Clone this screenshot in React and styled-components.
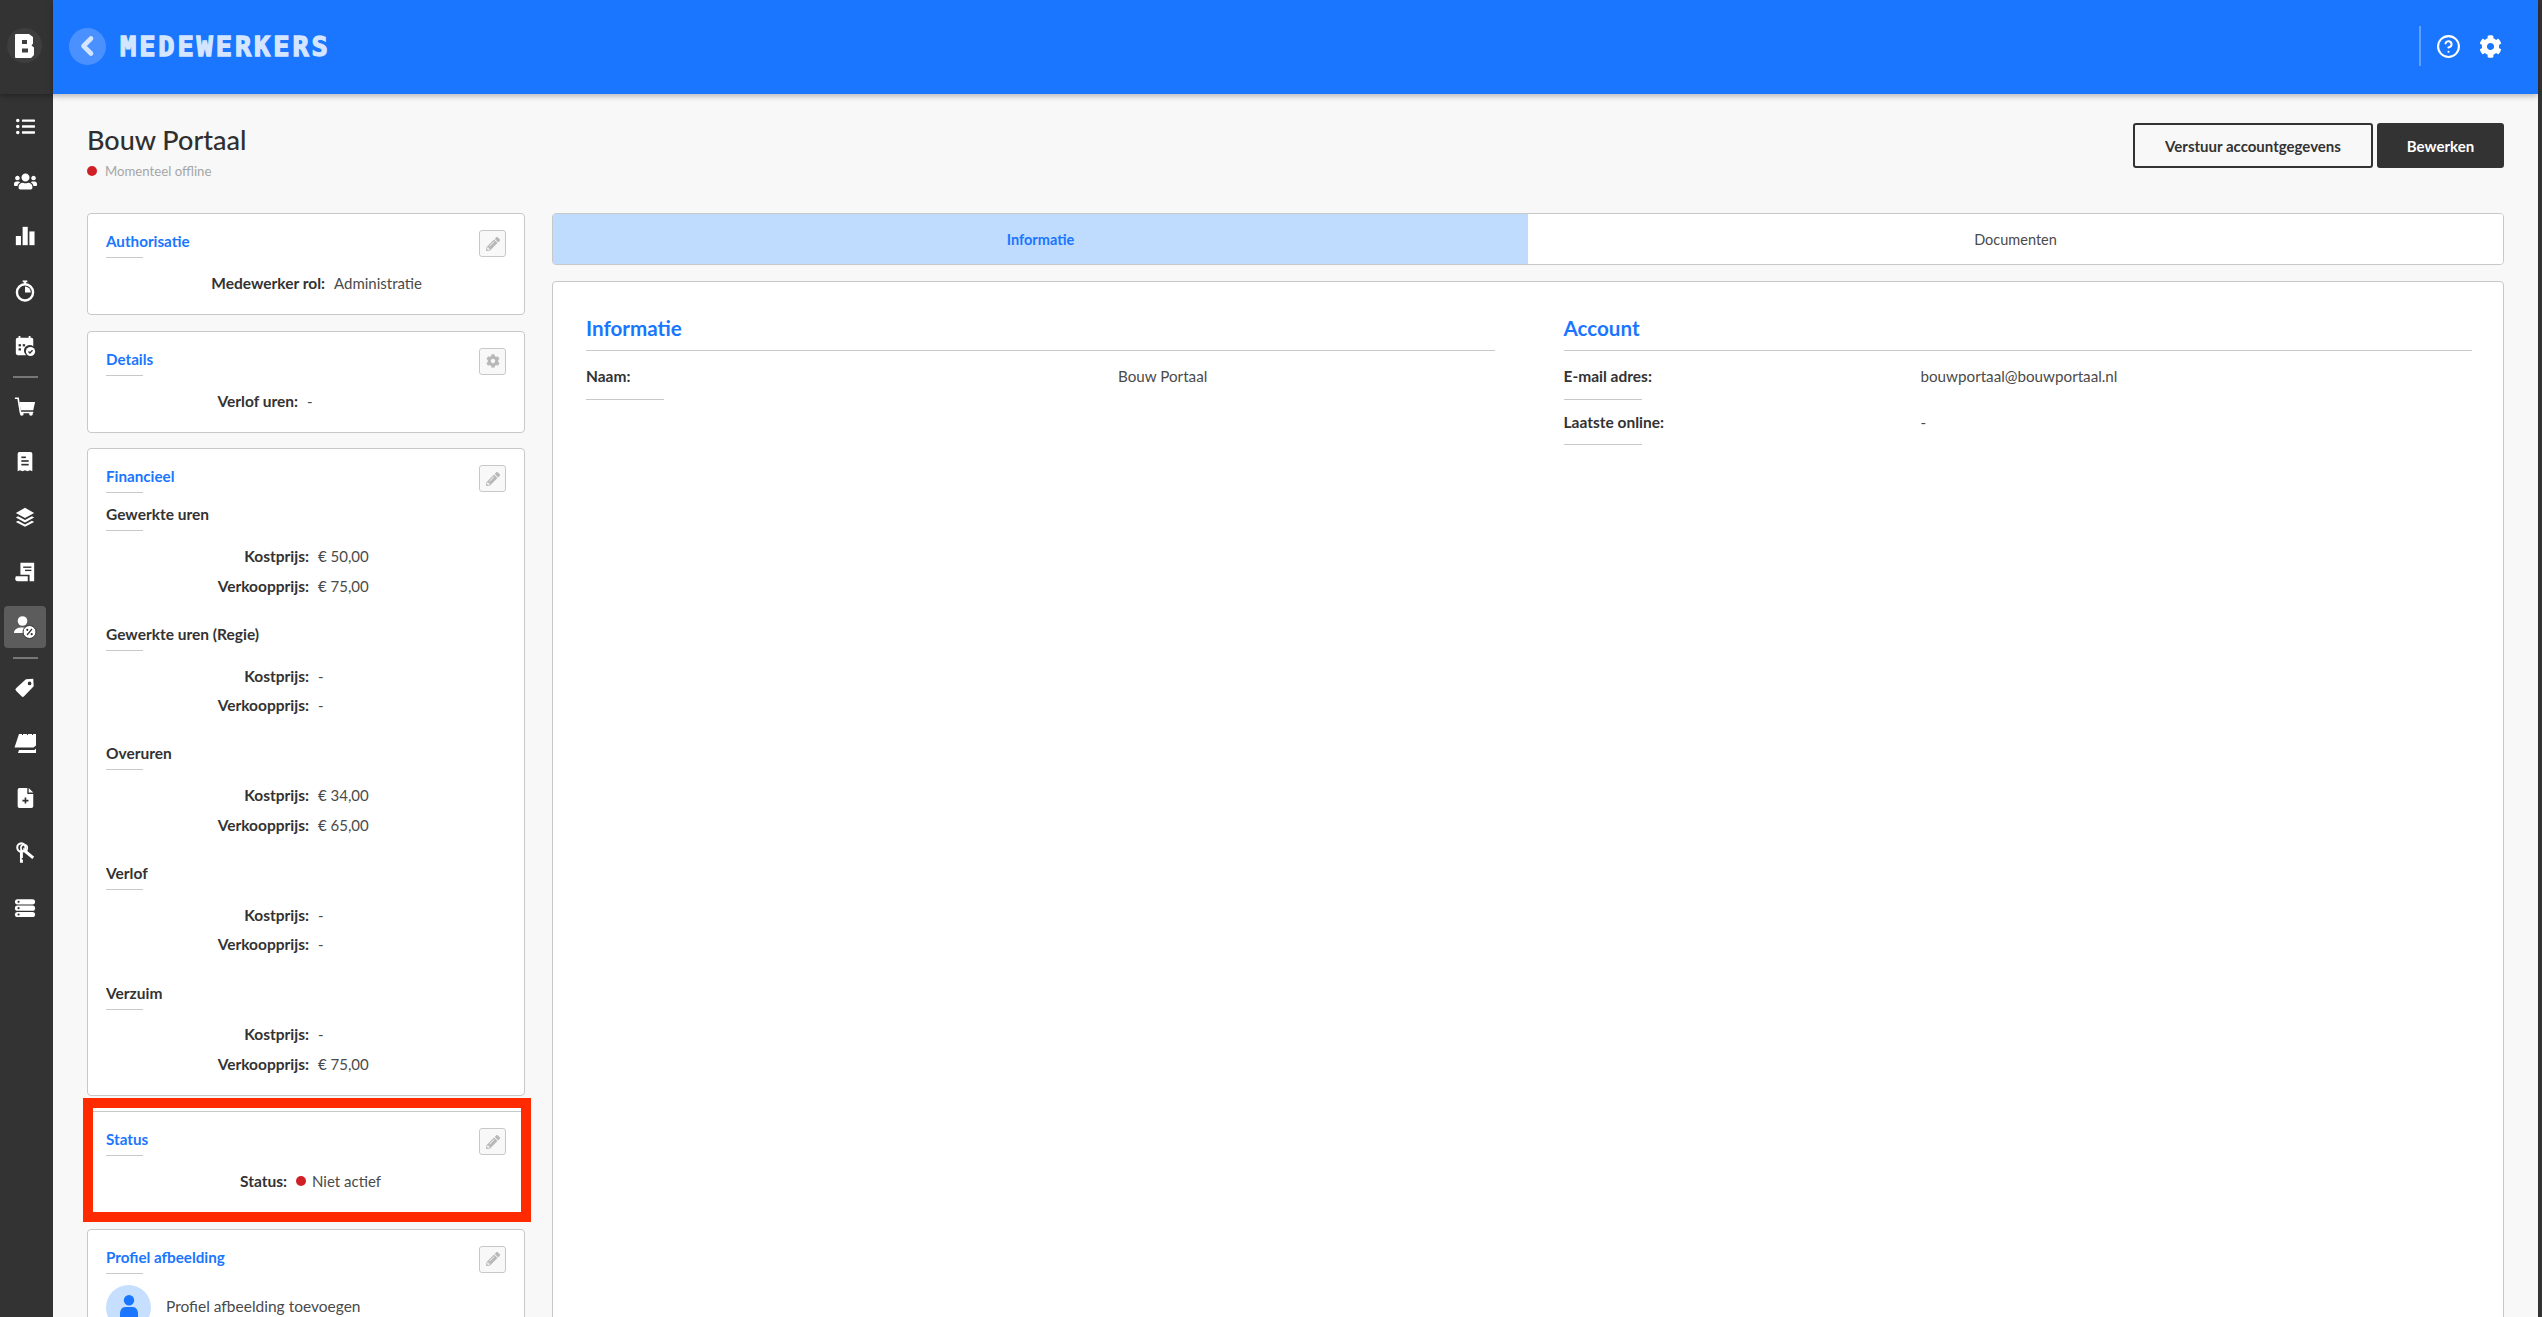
import React from "react"
import styled, { createGlobalStyle } from "styled-components"
import { FaListUl, FaUsers, FaPencilAlt, FaCog } from "react-icons/fa"
import { CircleHelp } from "lucide-react"

const DARK = "#333333"
const BLUE = "#1a76ff"
const RULE = "#c8c8c8"

const GlobalStyle = createGlobalStyle`
    *, *::before, *::after {
        box-sizing: border-box;
    }

    html, body {
        margin: 0;
        height: 100%;
        overflow: hidden;
        background: #f8f8f8;
    }

    body {
        font-family: Lato, "Open Sans", sans-serif;
        color: ${DARK};
    }
`

const Page = styled.div`
    display: grid;
    grid-template-columns: 53px 1fr 4px;
    height: 1317px;
    overflow: hidden;
`

const Sidebar = styled.nav`
    background: ${DARK};
    display: flex;
    flex-direction: column;
`

const LogoArea = styled.div`
    height: 94px;
    flex: none;
    display: flex;
    align-items: center;
    padding-left: 7px;
    margin-bottom: 4.5px;
    box-shadow: 0 2px 5px rgba(0, 0, 0, 0.3);
`

const LogoCircle = styled.div`
    width: 35px;
    height: 35px;
    margin-top: -3px;
    border-radius: 50%;
    background: #3e3e3e;
    display: flex;
    align-items: center;
    justify-content: center;
    color: #fff;
`

const NavItem = styled.div`
    height: 55px;
    flex: none;
    display: flex;
    align-items: center;
    padding-left: 4px;
`

const NavIcon = styled.div`
    width: 42px;
    height: 42px;
    border-radius: 4px;
    background: ${({ $active }) => ($active ? "#5c5c5c" : "transparent")};
    color: #fff;
    display: flex;
    align-items: center;
    justify-content: center;
`

const NavSeparator = styled.div`
    flex: none;
    height: 2px;
    width: 25px;
    margin: 2px 0 2px 13px;
    background: #777;
`

const Main = styled.div`
    display: flex;
    flex-direction: column;
    min-width: 0;
`

const Header = styled.header`
    height: 94px;
    flex: none;
    background: ${BLUE};
    box-shadow: 0 2px 6px rgba(0, 0, 0, 0.28);
    display: flex;
    align-items: center;
    padding: 0 36px 2px 16px;
    position: relative;
`

const BackButton = styled.div`
    width: 37px;
    height: 37px;
    border-radius: 50%;
    background: #4a91ff;
    display: flex;
    align-items: center;
    justify-content: center;
    color: #d4e5ff;
`

const HeaderTitle = styled.h1`
    margin: 0 0 0 14px;
    font-family: "DejaVu Sans Mono", monospace;
    font-size: 27px;
    font-weight: 700;
    letter-spacing: 2.9px;
    color: #d4e5ff;
    -webkit-text-stroke: 1.3px #d4e5ff;
`

const HeaderTools = styled.div`
    margin-left: auto;
    display: flex;
    align-items: center;
    color: #fff;
`

const HeaderDivider = styled.div`
    width: 2px;
    height: 40px;
    margin-right: 15px;
    background: rgba(255, 255, 255, 0.3);
`

const HeaderGear = styled(FaCog)`
    margin-left: 18px;
`

const Content = styled.main`
    flex: 1;
    min-height: 0;
    padding: 29px 34px 0;
`

const PageHead = styled.div`
    height: 90px;
    display: flex;
    justify-content: space-between;
    align-items: flex-start;
`

const PageTitle = styled.h2`
    margin: 0;
    font-size: 27px;
    line-height: 34px;
    font-weight: 500;
    color: #2f2f2f;
`

const Presence = styled.div`
    display: flex;
    align-items: center;
    gap: 8px;
    margin-top: 5px;
    font-size: 13.2px;
    line-height: 18px;
    font-weight: 400;
    color: #a6a6a6;
`

const Dot = styled.span`
    width: 10px;
    height: 10px;
    flex: none;
    border-radius: 50%;
    background: #d02027;
`

const Actions = styled.div`
    display: flex;
    gap: 4px;
`

const Button = styled.button`
    height: 45px;
    width: ${({ $width }) => $width}px;
    border: 2px solid ${DARK};
    border-radius: 3px;
    background: ${({ $solid }) => ($solid ? DARK : "transparent")};
    color: ${({ $solid }) => ($solid ? "#fff" : DARK)};
    font-family: inherit;
    font-size: 15px;
    font-weight: 700;
    padding: 0;
`

const Columns = styled.div`
    display: grid;
    grid-template-columns: 438px 1fr;
    column-gap: 27px;
    align-items: start;
`

const LeftColumn = styled.div`
    display: flex;
    flex-direction: column;
    gap: 15.6px;
`

const Card = styled.section`
    position: relative;
    background: #fff;
    border: 1px solid ${RULE};
    border-radius: 4px;
    padding: 16px 18px;
`

const Annotation = styled.div`
    position: absolute;
    top: -14px;
    left: -5px;
    right: -7px;
    bottom: -10px;
    border: 10px solid #ff2a00;
    background: linear-gradient(#fff 3px, transparent 3px);
    pointer-events: none;
`

const CardHead = styled.div`
    display: flex;
    justify-content: space-between;
    align-items: flex-start;
    height: 28px;
`

const CardTitle = styled.h3`
    margin: 0;
    font-size: 15.2px;
    line-height: 22px;
    font-weight: 700;
    color: ${BLUE};
`

const ShortRule = styled.div`
    width: 37px;
    height: 1px;
    margin-top: 5px;
    background: ${RULE};
`

const EditButton = styled.div`
    position: relative;
    z-index: 1;
    width: 27px;
    height: 27px;
    border: 1px solid ${RULE};
    border-radius: 3px;
    background: #f8f8f8;
    color: #b8b8b8;
    display: flex;
    align-items: center;
    justify-content: center;
`

const Rows = styled.div`
    margin-top: 10px;
`

const Row = styled.div`
    display: grid;
    grid-template-columns: ${({ $label }) => $label}px 1fr;
    column-gap: 9px;
    height: ${({ $height }) => $height || 30}px;
    align-items: center;
`

const RowLabel = styled.div`
    font-size: 15.5px;
    font-weight: 700;
    text-align: right;
    white-space: nowrap;
    color: #333;
`

const RowValue = styled.div`
    display: flex;
    align-items: center;
    gap: 6px;
    font-size: 15px;
    font-weight: 400;
    color: #4a4a4a;
    white-space: nowrap;
`

const Group = styled.div`
    margin-top: 10px;
    margin-bottom: 22.4px;

    &:last-child {
        margin-bottom: 0;
    }
`

const GroupTitle = styled.h4`
    margin: 0;
    font-size: 15.5px;
    line-height: 22px;
    font-weight: 700;
    color: #333;
`

const ProfileRow = styled.div`
    display: flex;
    align-items: flex-start;
    gap: 15px;
    margin-top: 11px;
    font-size: 15.5px;
    line-height: 42px;
    color: #4a4a4a;
`

const Avatar = styled.div`
    width: 45px;
    height: 45px;
    flex: none;
    border-radius: 50%;
    background: #c6dfff;
    color: ${BLUE};
    display: flex;
    align-items: center;
    justify-content: center;
    overflow: hidden;
`

const RightColumn = styled.div`
    display: flex;
    flex-direction: column;
    gap: 16px;
    min-width: 0;
`

const Tabs = styled.div`
    display: grid;
    grid-template-columns: 975px 1fr;
    height: 52px;
    border: 1px solid ${RULE};
    border-radius: 4px;
    background: #fff;
    overflow: hidden;
`

const Tab = styled.div`
    display: flex;
    align-items: center;
    justify-content: center;
    font-size: 14.5px;
    font-weight: ${({ $active }) => ($active ? 700 : 400)};
    background: ${({ $active }) => ($active ? "#bfdcff" : "#fff")};
    color: ${({ $active }) => ($active ? BLUE : "#4a4a4a")};
`

const InfoCard = styled.section`
    height: 1100px;
    background: #fff;
    border: 1px solid ${RULE};
    border-radius: 4px;
    padding: 33px 31px 0 33px;
    display: grid;
    grid-template-columns: 1fr 1fr;
    column-gap: 69px;
    align-items: start;
`

const InfoTitle = styled.h3`
    margin: 0;
    height: 36px;
    border-bottom: 1px solid ${RULE};
    font-size: 20.6px;
    line-height: 27px;
    font-weight: 700;
    color: ${BLUE};
`

const InfoRow = styled.div`
    display: grid;
    grid-template-columns: ${({ $label }) => $label}px 1fr;
    height: ${({ $first }) => ($first ? 49 : 45)}px;
    padding-top: ${({ $first }) => ($first ? 14 : 11)}px;
    line-height: 22px;
    position: relative;

    &::after {
        content: "";
        position: absolute;
        left: 0;
        bottom: 0;
        width: 78px;
        height: 1px;
        background: ${RULE};
    }
`

const InfoRows = styled.div`
    display: flex;
    flex-direction: column;
`

const InfoLabel = styled.div`
    font-size: 15.5px;
    font-weight: 700;
    color: #333;
`

const InfoValue = styled.div`
    font-size: 15.2px;
    color: #4a4a4a;
`

const Edge = styled.div`
    background: ${DARK};
`

const iconProps = { width: 22, height: 22, viewBox: "0 0 24 24", fill: "currentColor" }

const BarsIcon = () => (
    <svg {...iconProps}>
        <rect x="2" y="12" width="5.6" height="10" />
        <rect x="9.4" y="2" width="5.6" height="20" />
        <rect x="16.8" y="7" width="5.6" height="15" />
    </svg>
)

const TimerIcon = () => (
    <svg {...iconProps}>
        <rect x="9.5" y="0.5" width="5" height="2" />
        <rect x="11" y="2" width="2" height="3" />
        <circle cx="12" cy="13.5" r="8.8" fill="none" stroke="currentColor" strokeWidth="2.6" />
        <path d="M12 13.5V7.2a6.3 6.3 0 0 1 6.3 6.3z" />
    </svg>
)

const CalendarCheckIcon = () => (
    <svg {...iconProps}>
        <path d="M5 1h2v2h9V1h2v2h1a2 2 0 0 1 2 2v7.2a6 6 0 0 0-7.8 9.8H4a2 2 0 0 1-2-2V5a2 2 0 0 1 2-2h1z" />
        <g fill="#333">
            <rect x="5" y="10" width="2.6" height="2.4" />
            <rect x="9.5" y="10" width="2.6" height="2.4" />
            <rect x="5" y="14.5" width="2.6" height="2.4" />
        </g>
        <circle cx="18" cy="18" r="5" />
        <path d="M15.8 18l1.6 1.6 2.8-3" fill="none" stroke="#333" strokeWidth="1.5" />
    </svg>
)

const CartIcon = () => (
    <svg {...iconProps}>
        <path d="M1 2.5h3.5L7 18h14" fill="none" stroke="currentColor" strokeWidth="1.8" />
        <path d="M6 6.5h17L21 15.5H7.2z" />
        <circle cx="8.5" cy="19.5" r="2" />
        <circle cx="18.5" cy="19.5" r="2" />
    </svg>
)

const ReceiptIcon = () => (
    <svg {...iconProps}>
        <path d="M4 3a2 2 0 0 1 2-2h12a2 2 0 0 1 2 2v19l-2.600-1-2.700 1-2.700-1-2.700 1-2.700-1L4 22z" />
        <g fill="#333">
            <rect x="8" y="6" width="5" height="1.800" />
            <rect x="8" y="10" width="8" height="1.800" />
            <rect x="8" y="14" width="8" height="1.800" />
        </g>
    </svg>
)

const LayersIcon = () => (
    <svg {...iconProps}>
        <path d="M12 2l10 5.500-10 5.500L2 7.500z" />
        <path d="M2 12.500l2.500-1.400 7.500 4.100 7.500-4.100 2.500 1.400-10 5.500z" />
        <path d="M2 17.500l2.500-1.400 7.500 4.100 7.500-4.100 2.500 1.400-10 5z" />
    </svg>
)

const InvoiceIcon = () => (
    <svg {...iconProps}>
        <path d="M7 2h15v20h-5v-7H7z" />
        <path d="M2 16.500h13V22H4a3 3 0 0 1-2.800-2.500z" />
        <g fill="#333">
            <rect x="10" y="6" width="9" height="1.500" />
            <rect x="12" y="9.500" width="7" height="1.500" />
        </g>
    </svg>
)

const UserPercentIcon = () => (
    <svg {...iconProps} width="24" height="24">
        <circle cx="9.500" cy="6" r="4.800" />
        <path d="M1 18c0-3.500 3-5.500 8.500-5.500 1.500 0 2.800.2 3.900.5a7 7 0 0 0-2 5z" />
        <circle cx="16.500" cy="17" r="6.500" stroke="#333" strokeWidth="1" />
        <path d="M14 20l5-6" stroke="#333" strokeWidth="1.200" />
        <circle cx="14.300" cy="14.800" r="1.100" fill="#333" />
        <circle cx="18.700" cy="19.200" r="1.100" fill="#333" />
    </svg>
)

const TagIcon = () => (
    <svg {...iconProps}>
        <path d="M13 2.500l8-.5.500 8-10.500 11a2 2 0 0 1-2.800 0l-6-6a2 2 0 0 1 0-2.800zM17 5a2 2 0 1 0 0 4 2 2 0 0 0 0-4z" fillRule="evenodd" />
    </svg>
)

const CalendarSheetIcon = () => (
    <svg {...iconProps} width="24" height="24">
        <path d="M6 3h17v11.500l-2.500 2H1.500z" />
        <path d="M6 19h15.500l1.500-1.500V22H5z" />
        <g fill="#333">
            <rect x="9" y="2" width="1" height="2" />
            <rect x="14" y="2" width="1" height="2" />
            <rect x="19" y="2" width="1" height="2" />
        </g>
    </svg>
)

const FilePlusIcon = () => (
    <svg {...iconProps}>
        <path d="M6 1h8.500v6.500H21V21a2 2 0 0 1-2 2H6a2 2 0 0 1-2-2V3a2 2 0 0 1 2-2z" />
        <path d="M16 1l5 5h-5z" />
        <path d="M12.500 11.500v6.500M9.200 14.800h6.600" stroke="#333" strokeWidth="1.800" />
    </svg>
)

const KeysIcon = () => (
    <svg {...iconProps}>
        <circle cx="8" cy="6" r="4.500" fill="none" stroke="currentColor" strokeWidth="2.200" />
        <path d="M6.500 9v13.500h3.200V19H8.500v-1.500h1.200V9z" />
        <path d="M10 6l12 10-2 2.500L10.500 11z" />
        <circle cx="11" cy="6.500" r="3.500" fill="none" stroke="currentColor" strokeWidth="1.800" />
    </svg>
)

const ServerIcon = () => (
    <svg {...iconProps}>
        <rect x="1" y="2.500" width="22" height="5.600" rx="2.800" />
        <rect x="1" y="9.400" width="22" height="5.600" rx="2.800" />
        <rect x="1" y="16.300" width="22" height="5.600" rx="2.800" />
        <g fill="#333">
            <circle cx="5" cy="5.300" r="1.200" />
            <circle cx="5" cy="12.200" r="1.200" />
            <circle cx="5" cy="19.100" r="1.200" />
        </g>
    </svg>
)

const LogoIcon = () => (
    <svg width="20" height="24" viewBox="0 0 20 24" fill="currentColor">
        <path fillRule="evenodd" d="M1 0h13l4 3v6.500l-1.500 2 2.500 2V21l-3 3H1a1 1 0 0 1-1-1V1a1 1 0 0 1 1-1zM7 6v4h5V6zM7 14.500v4h6v-4z" />
    </svg>
)

const ChevronIcon = () => (
    <svg width="20" height="22" viewBox="0 0 20 22" fill="none" stroke="currentColor" strokeWidth="4.600" strokeLinecap="round" strokeLinejoin="round">
        <path d="M13 3.500L5.500 11l7.500 7.500" />
    </svg>
)

const PersonIcon = () => (
    <svg width="18" height="24" viewBox="0 0 18 24" fill="currentColor">
        <circle cx="9" cy="5.200" r="5.200" />
        <path d="M0 19c0-4 2-7 5-7h8c3 0 5 3 5 7v5H0z" />
    </svg>
)

const navTop = [
    [<FaListUl size={19} />],
    [<FaUsers size={23} />],
    [<BarsIcon />],
    [<TimerIcon />],
    [<CalendarCheckIcon />]
]

const navMiddle = [
    [<CartIcon />],
    [<ReceiptIcon />],
    [<LayersIcon />],
    [<InvoiceIcon />],
    [<UserPercentIcon />, true]
]

const navBottom = [
    [<TagIcon />],
    [<CalendarSheetIcon />],
    [<FilePlusIcon />],
    [<KeysIcon />],
    [<ServerIcon />]
]

const renderNav = items => items.map(([icon, active], index) => (
    <NavItem key={index}>
        <NavIcon $active={active}>{icon}</NavIcon>
    </NavItem>
))

const prices = [
    { title: "Gewerkte uren", cost: "€ 50,00", sale: "€ 75,00" },
    { title: "Gewerkte uren (Regie)", cost: "-", sale: "-" },
    { title: "Overuren", cost: "€ 34,00", sale: "€ 65,00" },
    { title: "Verlof", cost: "-", sale: "-" },
    { title: "Verzuim", cost: "-", sale: "€ 75,00" }
]

const CardHeading = ({ title, icon }) => (
    <CardHead>
        <div>
            <CardTitle>{title}</CardTitle>
            <ShortRule />
        </div>
        <EditButton>{icon || <FaPencilAlt size={14} />}</EditButton>
    </CardHead>
)

export default function App() {
    return <>
        <GlobalStyle />
        <Page>
            <Sidebar>
                <LogoArea>
                    <LogoCircle><LogoIcon /></LogoCircle>
                </LogoArea>
                {renderNav(navTop)}
                <NavSeparator />
                {renderNav(navMiddle)}
                <NavSeparator />
                {renderNav(navBottom)}
            </Sidebar>
            <Main>
                <Header>
                    <BackButton><ChevronIcon /></BackButton>
                    <HeaderTitle>MEDEWERKERS</HeaderTitle>
                    <HeaderTools>
                        <HeaderDivider />
                        <CircleHelp size={25} strokeWidth={2} />
                        <HeaderGear size={23} />
                    </HeaderTools>
                </Header>
                <Content>
                    <PageHead>
                        <div>
                            <PageTitle>Bouw Portaal</PageTitle>
                            <Presence><Dot />Momenteel offline</Presence>
                        </div>
                        <Actions>
                            <Button $width={240}>Verstuur accountgegevens</Button>
                            <Button $solid $width={127}>Bewerken</Button>
                        </Actions>
                    </PageHead>
                    <Columns>
                        <LeftColumn>
                            <Card>
                                <CardHeading title="Authorisatie" />
                                <Rows>
                                    <Row $label={219}>
                                        <RowLabel>Medewerker rol:</RowLabel>
                                        <RowValue>Administratie</RowValue>
                                    </Row>
                                </Rows>
                            </Card>
                            <Card>
                                <CardHeading title="Details" icon={<FaCog size={14} />} />
                                <Rows>
                                    <Row $label={192}>
                                        <RowLabel>Verlof uren:</RowLabel>
                                        <RowValue>-</RowValue>
                                    </Row>
                                </Rows>
                            </Card>
                            <Card>
                                <CardHeading title="Financieel" />
                                {prices.map(price => (
                                    <Group key={price.title}>
                                        <GroupTitle>{price.title}</GroupTitle>
                                        <ShortRule />
                                        <Rows>
                                            <Row $label={203} $height={29.6}>
                                                <RowLabel>Kostprijs:</RowLabel>
                                                <RowValue>{price.cost}</RowValue>
                                            </Row>
                                            <Row $label={203} $height={29.6}>
                                                <RowLabel>Verkoopprijs:</RowLabel>
                                                <RowValue>{price.sale}</RowValue>
                                            </Row>
                                        </Rows>
                                    </Group>
                                ))}
                            </Card>
                            <Card>
                                <CardHeading title="Status" />
                                <Rows>
                                    <Row $label={181}>
                                        <RowLabel>Status:</RowLabel>
                                        <RowValue><Dot />Niet actief</RowValue>
                                    </Row>
                                </Rows>
                                <Annotation />
                            </Card>
                            <Card>
                                <CardHeading title="Profiel afbeelding" />
                                <ProfileRow>
                                    <Avatar><PersonIcon /></Avatar>
                                    Profiel afbeelding toevoegen
                                </ProfileRow>
                            </Card>
                        </LeftColumn>
                        <RightColumn>
                            <Tabs>
                                <Tab $active>Informatie</Tab>
                                <Tab>Documenten</Tab>
                            </Tabs>
                            <InfoCard>
                                <div>
                                    <InfoTitle>Informatie</InfoTitle>
                                    <InfoRows>
                                        <InfoRow $label={532} $first>
                                            <InfoLabel>Naam:</InfoLabel>
                                            <InfoValue>Bouw Portaal</InfoValue>
                                        </InfoRow>
                                    </InfoRows>
                                </div>
                                <div>
                                    <InfoTitle>Account</InfoTitle>
                                    <InfoRows>
                                        <InfoRow $label={357} $first>
                                            <InfoLabel>E-mail adres:</InfoLabel>
                                            <InfoValue>bouwportaal@bouwportaal.nl</InfoValue>
                                        </InfoRow>
                                        <InfoRow $label={357}>
                                            <InfoLabel>Laatste online:</InfoLabel>
                                            <InfoValue>-</InfoValue>
                                        </InfoRow>
                                    </InfoRows>
                                </div>
                            </InfoCard>
                        </RightColumn>
                    </Columns>
                </Content>
            </Main>
            <Edge />
        </Page>
    </>
}
